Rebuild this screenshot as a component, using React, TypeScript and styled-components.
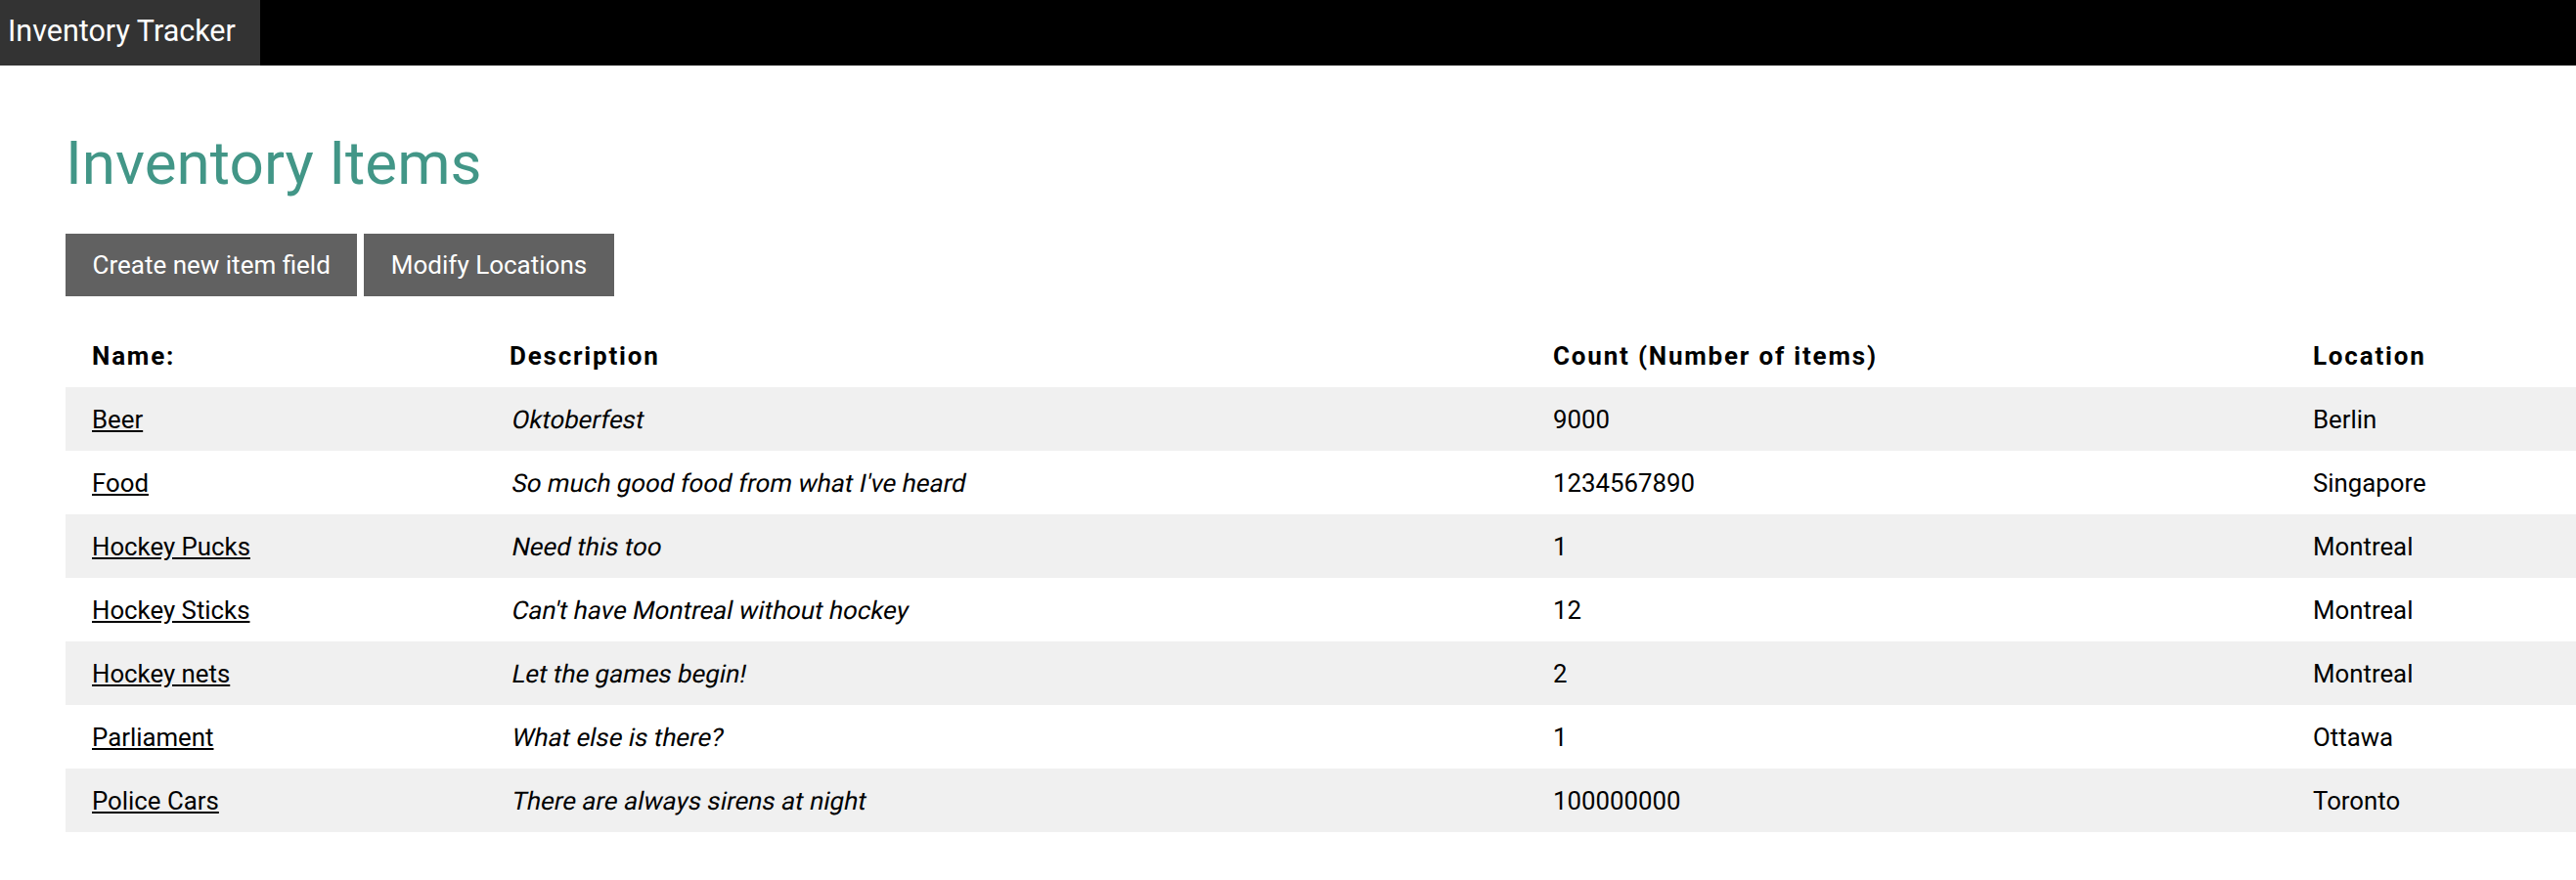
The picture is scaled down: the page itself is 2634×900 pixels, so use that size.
import React from "react";
import styled, { createGlobalStyle } from "styled-components";

const GlobalStyle = createGlobalStyle`
  html, body {
    margin: 0;
    padding: 0;
    background: #ffffff;
    overflow-x: hidden;
  }
  body {
    font-family: Roboto, "Liberation Sans", Arial, sans-serif;
    color: #000000;
  }
`;

const TopBar = styled.header`
  display: flex;
  align-items: stretch;
  height: 67px;
  background: #000000;
`;

const Brand = styled.a`
  display: flex;
  align-items: center;
  width: 266px;
  box-sizing: border-box;
  padding: 0 0 4px 8px;
  background: #333333;
  color: #ffffff;
  font-size: 30.5px;
  line-height: 36px;
  text-decoration: none;
`;

const Main = styled.main`
  padding: 0 0 40px 67px;
`;

const Title = styled.h1`
  margin: 64px 0 0;
  font-size: 62px;
  line-height: 72px;
  font-weight: 400;
  color: #429687;
`;

const Toolbar = styled.div`
  display: flex;
  gap: 7px;
  margin-top: 36px;
`;

const Button = styled.button`
  border: none;
  margin: 0;
  padding: 17px 27.5px;
  background: #616161;
  color: #ffffff;
  font-family: Roboto, "Liberation Sans", Arial, sans-serif;
  font-size: 26px;
  line-height: 30px;
  cursor: pointer;
`;

const Table = styled.table`
  margin-top: 28px;
  border-collapse: collapse;
  table-layout: fixed;
  width: 2671px;
`;

const Col = styled.col<{ $w: number }>`
  width: ${(p) => p.$w}px;
`;

const HeadCell = styled.th`
  padding: 18px 27px 17px;
  text-align: left;
  font-size: 26px;
  line-height: 30px;
  font-weight: 700;
  letter-spacing: 1.8px;
  white-space: nowrap;
`;

const Row = styled.tr<{ $shaded: boolean }>`
  background: ${(p) => (p.$shaded ? "#f0f0f0" : "#ffffff")};
`;

const Cell = styled.td`
  padding: 18px 27px 17px;
  font-size: 25.8px;
  line-height: 30px;
  white-space: nowrap;
`;

const Slanted = styled.span`
  display: inline-block;
  transform: skewX(-11deg);
  transform-origin: 0 100%;
`;

const ItemLink = styled.a`
  color: #000000;
  text-decoration: underline;
  text-underline-offset: 2px;
`;

const items = [
  { name: "Beer", description: "Oktoberfest", count: "9000", location: "Berlin" },
  { name: "Food", description: "So much good food from what I've heard", count: "1234567890", location: "Singapore" },
  { name: "Hockey Pucks", description: "Need this too", count: "1", location: "Montreal" },
  { name: "Hockey Sticks", description: "Can't have Montreal without hockey", count: "12", location: "Montreal" },
  { name: "Hockey nets", description: "Let the games begin!", count: "2", location: "Montreal" },
  { name: "Parliament", description: "What else is there?", count: "1", location: "Ottawa" },
  { name: "Police Cars", description: "There are always sirens at night", count: "100000000", location: "Toronto" },
];

export default function App() {
  return (
    <>
      <GlobalStyle />
      <TopBar>
        <Brand href="#">Inventory Tracker</Brand>
      </TopBar>
      <Main>
        <Title>Inventory Items</Title>
        <Toolbar>
          <Button>Create new item field</Button>
          <Button>Modify Locations</Button>
        </Toolbar>
        <Table>
          <colgroup>
            <Col $w={427} />
            <Col $w={1067} />
            <Col $w={777} />
            <Col $w={400} />
          </colgroup>
          <thead>
            <tr>
              <HeadCell>Name:</HeadCell>
              <HeadCell>Description</HeadCell>
              <HeadCell>Count (Number of items)</HeadCell>
              <HeadCell>Location</HeadCell>
            </tr>
          </thead>
          <tbody>
            {items.map((item, i) => (
              <Row key={item.name} $shaded={i % 2 === 0}>
                <Cell>
                  <ItemLink href="#">{item.name}</ItemLink>
                </Cell>
                <Cell>
                  <Slanted>{item.description}</Slanted>
                </Cell>
                <Cell>{item.count}</Cell>
                <Cell>{item.location}</Cell>
              </Row>
            ))}
          </tbody>
        </Table>
      </Main>
    </>
  );
}
